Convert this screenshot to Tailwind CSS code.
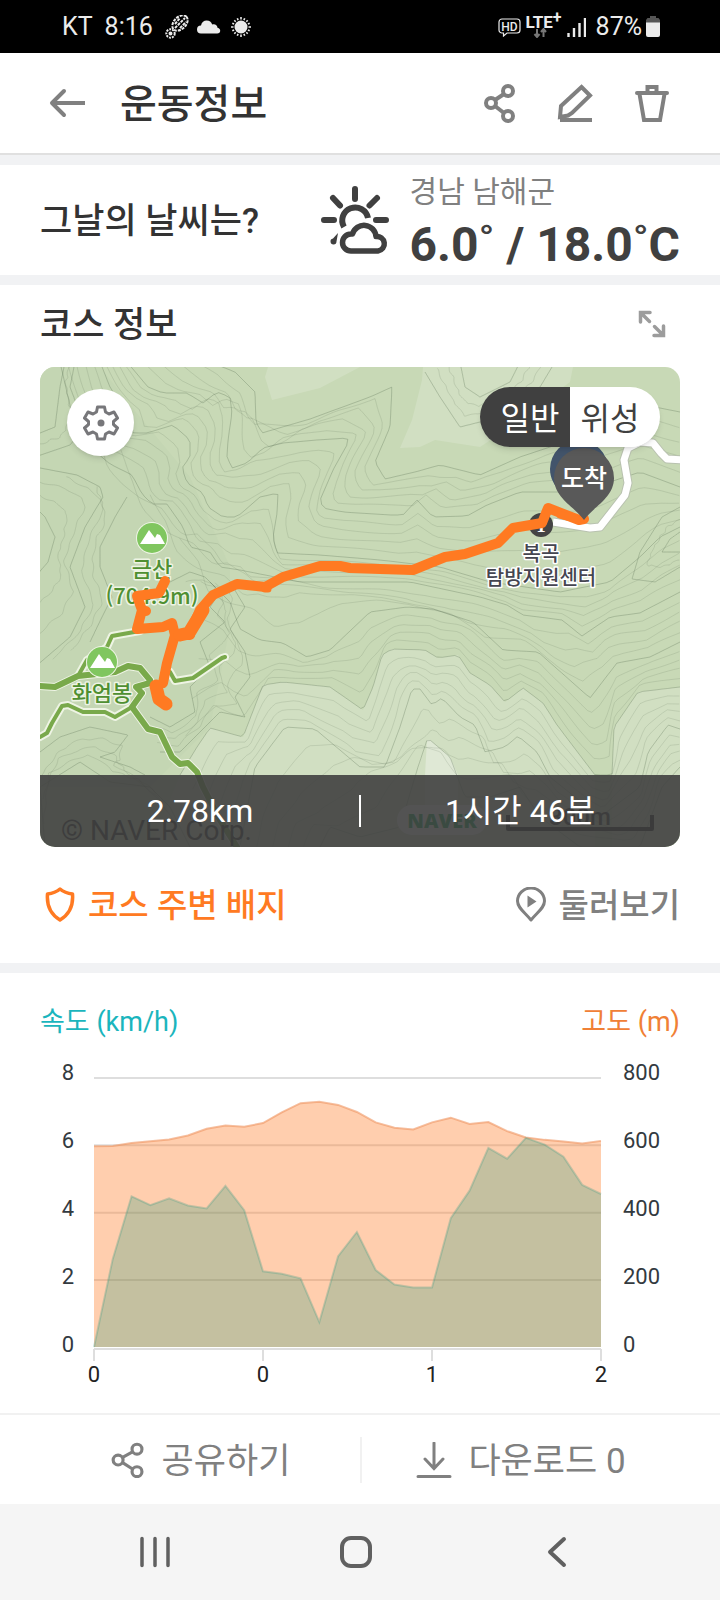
<!DOCTYPE html>
<html lang="ko">
<head>
  <meta charset="UTF-8" />
  <meta name="viewport" content="width=device-width, initial-scale=1" />
  <title>운동정보</title>
  <script src="https://cdn.jsdelivr.net/npm/@tailwindcss/browser@4"></script>
</head>
<body class="bg-white font-['Roboto','Noto_Sans_CJK_KR',sans-serif] text-[#333333]">

  <!-- 상태 표시줄 -->
  <div class="flex h-[53px] items-center justify-between bg-black pl-[62px] pr-[60px] text-[25px] leading-8 text-[#ebebeb]">
    <div class="flex items-center">
      <span>KT</span>
      <span class="ml-3">8:16</span>
      <svg class="ml-3 h-6 w-6" viewBox="0 0 24 24" fill="none" stroke="#ebebeb" stroke-width="2">
        <ellipse cx="15" cy="8" rx="9" ry="6" transform="rotate(-45 15 8)" stroke-dasharray="3 1" />
        <path d="M10 13L20 3M10 9l5-6M15 13l6-6" stroke-dasharray="3 1" />
        <circle cx="5.500" cy="18.500" r="4.200" stroke-dasharray="2 1" />
        <circle cx="5.500" cy="18.500" r="1" />
      </svg>
      <svg class="ml-2 h-6 w-6" viewBox="0 0 24 24" fill="#ebebeb">
        <path d="M4 18.500a4 4 0 0 1 0-8c.6-3.500 3-5 5.600-5 3 0 4.700 1.600 5.600 4 3-.8 5 .8 5.300 3.300 2 .4 2.700 1.600 2.700 3 0 1.700-1.200 2.700-3 2.700z" />
      </svg>
      <svg class="ml-2 h-6 w-6" viewBox="0 0 24 24" stroke="#ebebeb" stroke-width="1.600">
        <circle cx="12" cy="12" r="6.500" fill="#ebebeb" stroke="none" />
        <path d="M12 2v2.500M12 19.500v2.500M2 12h2.500M19.500 12h2.500M5.300 5.300l1.400 1.400M17.300 17.300l1.400 1.400M5.300 18.700l1.400-1.400M17.300 6.700l1.400-1.400M8.300 3.300l.8 1.800M14.900 18.900l.8 1.800M3.300 8.300l1.800.8M18.900 14.900l1.800.8M15.700 3.300l-.8 1.800M9.100 18.900l-.8 1.800M20.700 8.300l-1.800.8M5.100 14.900l-1.800.8" />
      </svg>
    </div>
    <div class="flex items-center">
      <svg class="h-5 w-[23px]" viewBox="0 0 23 20" fill="none" stroke="#ebebeb" stroke-width="1.200">
        <path d="M4 2h15a3 3 0 0 1 3 3v8a3 3 0 0 1-3 3H9l-3.500 3V16H4a3 3 0 0 1-3-3V5a3 3 0 0 1 3-3z" />
        <text x="11.500" y="13.500" text-anchor="middle" font-family="Roboto, sans-serif" font-size="12" font-weight="500" fill="#ebebeb" stroke="none">HD</text>
      </svg>
      <div class="ml-1 flex flex-col items-center">
        <div class="flex text-[17px] leading-3 font-bold">LTE<span class="-mt-1 text-base leading-3">+</span></div>
        <svg class="-ml-2 h-2.5 w-3.5" viewBox="0 0 14 10" fill="none" stroke="#777" stroke-width="2">
          <path d="M4 1v8M1.500 6L4 9l2.500-3M10.500 9V1M8 4l2.500-3L13 4" />
        </svg>
      </div>
      <svg class="ml-1 h-5 w-5" viewBox="0 0 20 20" stroke="#ebebeb" stroke-width="2.400">
        <path d="M2.500 16v4M8 11v9M13.500 6v14M19 1v19" />
      </svg>
      <span class="ml-2.5">87%</span>
      <svg class="ml-1 h-[21px] w-3.5" viewBox="0 0 14 21">
        <path d="M4 0h6v2h2.500L14 4v3H0V4l1.500-2H4z" fill="#555" />
        <path d="M0 6.500h14V19a2 2 0 0 1-2 2H2a2 2 0 0 1-2-2z" fill="#ebebeb" />
      </svg>
    </div>
  </div>

  <!-- 상단 헤더 -->
  <header class="flex h-[102px] items-center border-b-2 border-[#e0e0e0] pl-[49px] pr-12 text-[#808080]">
    <button type="button" aria-label="뒤로" class="shrink-0">
      <svg class="h-9 w-9" viewBox="0 0 36 36" fill="none" stroke="currentColor" stroke-width="4" stroke-linecap="round" stroke-linejoin="round">
        <path d="M15 6L3 18l12 12" /><path d="M3 18h33" stroke-linecap="butt" />
      </svg>
    </button>
    <h1 class="ml-[35px] flex-1 pt-1 text-[40px] leading-[60px] font-medium text-[#333333]">운동정보</h1>
    <div class="flex items-center gap-9">
      <button type="button" aria-label="공유">
        <svg class="h-10 w-10" viewBox="0 0 40 40" fill="none" stroke="currentColor" stroke-width="4">
          <circle cx="11" cy="20" r="5" /><circle cx="28" cy="8" r="5" /><circle cx="28" cy="33" r="5" /><path d="M15 17l9-6M15 23l9 7" />
        </svg>
      </button>
      <button type="button" aria-label="편집">
        <svg class="h-10 w-10" viewBox="0 0 40 40" fill="none" stroke="currentColor" stroke-width="4">
          <path d="M25.500 4l8.500 8.500L16 30l-4 2.500-8 1.500 1-11z" /><path d="M4 37h32" />
        </svg>
      </button>
      <button type="button" aria-label="삭제">
        <svg class="h-10 w-10" viewBox="0 0 40 40" fill="none" stroke="currentColor" stroke-width="4">
          <path d="M5 10h30" stroke-linecap="round" /><path d="M15.500 9V4h9v5M7.500 11l4.500 26h16l4.500-26" />
        </svg>
      </button>
    </div>
  </header>

  <!-- 날씨 -->
  <section class="flex h-[130px] items-center justify-between border-y-10 border-[#f1f2f4] px-10">
    <h2 class="pt-1 text-[35px] leading-[50px] font-medium">그날의 날씨는?</h2>
    <div class="flex items-center text-[#404040]">
      <svg class="h-[70px] w-[70px]" viewBox="0 0 70 70" fill="none" stroke="currentColor" stroke-width="6" stroke-linecap="round">
        <path d="M35 4v10M13 13l7 7.500M57 13l-7.500 7.500M4 35h10M56 35h10" />
        <path d="M24 42a13 13 0 1 1 24-9" stroke-linecap="butt" />
        <path d="M31 66a8.500 8.500 0 0 1 0-17h1.500a12 12 0 0 1 23.500 2.500a7.300 7.300 0 0 1 2 14.500z" stroke-width="5.500" stroke-linejoin="round" />
        <path d="M18 48l-5 5.500a3 3 0 1 0 3.500 3z" fill="currentColor" stroke="none" />
      </svg>
      <div class="ml-5 pt-1">
        <p class="text-[30px] leading-[46px] text-[#808080]">경남 남해군</p>
        <p class="text-5xl leading-[60px] font-bold">6.0˚ / 18.0˚C</p>
      </div>
    </div>
  </section>

  <!-- 코스 정보 -->
  <section class="px-10">
    <div class="flex h-[82px] items-center justify-between pb-1 pr-3.5">
      <h2 class="pt-1 text-[35px] leading-[50px] font-medium">코스 정보</h2>
      <button type="button" aria-label="크게 보기" class="text-[#9c9c9c]">
        <svg class="h-7 w-7" viewBox="0 0 28 28" fill="none" stroke="currentColor" stroke-width="3.500" stroke-linecap="round" stroke-linejoin="miter">
          <path d="M2.500 12V2.500H12M3.500 3.500l8 8M25.500 16v9.500H16M24.500 24.500l-8-8" />
        </svg>
      </button>
    </div>

    <!-- 지도 -->
    <div class="relative h-[480px] overflow-hidden rounded-[15px] bg-[#c8d9b6]">
      <svg class="h-full w-full" viewBox="0 0 640 480" preserveAspectRatio="xMidYMid slice" fill="none" stroke-linejoin="round" font-family="'Noto Sans CJK KR', sans-serif" text-anchor="middle">
        <path fill="#c4d6b3" d="M0 0h60l40 50 50 60 40 90 0 60-20 100-60 60H0z" />
        <g fill="#d1dfc2">
          <path d="M228 0l-3 10 7 23 48-12L320 0zM383 0l-1 13-10 40-12 28 20-1 15-7 45 7 30-20 60-45 3-15z" />
          <path d="M140 408L157 380 170 361 203 370 223 318 243 315 290 320 323 343 333 320 342 288 352 282 385 283 398 291 418 288 430 306 450 318 465 335 483 321 503 336 517 358 555 408V480H110zM572 408L574 360 598 325 604 324 640 320V480H572z" />
        </g>
        <path fill="#dfe8d5" d="M385 408l2-35h3l20 17 8 18v60h-33z" />
        <g id="contours" stroke="#5d7356"></g>

        <!-- 등산로 -->
        <g stroke-linecap="round">
          <path stroke="#eef4e4" stroke-width="8" d="M0 319L15 320 38 309 57 307 75 305 88 299 100 301 110 313M110 316L96 320 102 326 92 340 108 362 120 365 132 390 140 397 148 396 157 405 163 420 180 453 197 480M38 309L47 293 67 280 72 269 83 267 100 264M92 340L75 350 65 345 43 345 28 338 22 339 12 356 7 366 0 370M130 305L135 314 153 311 182 291 185 290" />
          <path stroke="#79a94b" stroke-width="6" d="M0 319L15 320 38 309 57 307 75 305 88 299 100 301 110 313M110 316L96 320 102 326 92 340 108 362 120 365 132 390 140 397 148 396 157 405 163 420 180 453 197 480" />
          <path stroke="#79a94b" stroke-width="4" d="M38 309L47 293 67 280 72 269 83 267 100 264M92 340L75 350 65 345 43 345 28 338 22 339 12 356 7 366 0 370M130 305L135 314 153 311 182 291 185 290" />
        </g>

        <!-- 도로 -->
        <path stroke="#b9c2b0" stroke-width="9" d="M644 93L627 92 621 86 613 76 600 75 588 81 584 93 588 116 585 128 560 160 550 161 513 155" />
        <path stroke="#fff" stroke-width="7" d="M644 93L627 92 621 86 613 76 600 75 588 81 584 93 588 116 585 128 560 160 550 161 513 155" />

        <!-- 봉우리 -->
        <g font-size="22" font-weight="500" fill="#4f8f32" stroke="#eef4e4" stroke-width="3" paint-order="stroke">
          <circle cx="112" cy="171" r="15" fill="#80c65f" stroke-width="2" />
          <circle cx="62" cy="295" r="15" fill="#80c65f" stroke-width="2" />
          <path fill="#fff" stroke="none" d="M100 177l9-14 6 8 2-4 3 1 5 9zM50 301l9-14 6 8 2-4 3 1 5 9z" />
          <text x="112" y="210">금산</text>
          <text x="112" y="237">(704.9m)</text>
          <text x="62" y="334">화엄봉</text>
        </g>

        <circle cx="501" cy="158" r="12" fill="#444" />
        <text x="501" y="165" font-family="'Liberation Serif', serif" font-size="19" font-weight="700" fill="#fff">1</text>
        <g font-size="20" font-weight="500" fill="#454550" stroke="#fff" stroke-width="3" paint-order="stroke">
          <text x="501" y="194">복곡</text>
          <text x="501" y="218">탐방지원센터</text>
        </g>

        <!-- 이동 경로 -->
        <g stroke="#ff7a22" stroke-linecap="round">
          <path stroke-width="10" d="M544 152L539 153 508 141 502 156 473 161 458 176 425 187 405 190 373 203 340 202 310 201 300 199 280 199 243 210 225 220 197 217 173 228 160 243 150 266" />
          <path stroke-width="10" d="M150 268L135 268 127 296 123 316M135 268L132 256 123 260 97 262 102 243 97 229 119 226 125 214M102 243L106 244" />
          <path stroke-width="13" d="M163 243L149 266 140 268M116 319L119 332 126 337" />
          <path stroke-width="7" d="M540 153L520 148M225 222L228 222" />
        </g>

        <!-- 출발 / 도착 핀 -->
        <path fill="#42546b" d="M539 144c-9-13-29-22-29-42a29 29 0 0 1 58 0c0 20-20 29-29 42z" />
        <path fill="#595959" d="M544 153c-9-13-30-22-30-42a30 30 0 0 1 60 0c0 20-21 29-30 42z" />
        <text x="544" y="120" font-size="25" font-weight="500" fill="#fff">도착</text>

        <text x="21" y="473" text-anchor="start" font-family="Roboto, sans-serif" font-size="28" fill="#222">© NAVER Corp.</text>
        <rect x="357" y="438" width="90" height="30" rx="15" fill="#fff" />
        <text x="402" y="461" font-family="'Open Sans', sans-serif" font-size="20" font-weight="800" fill="#03a64a">NAVER</text>
        <path stroke="#111" stroke-width="4" d="M468 448v14h144v-14" />
        <text x="540" y="458" font-family="Roboto, sans-serif" font-size="24" font-weight="500" fill="#222">300m</text>
      </svg>

      <button type="button" aria-label="지도 설정" class="absolute left-[27px] top-[22px] flex h-[67px] w-[67px] items-center justify-center rounded-full bg-white text-[#77777a] shadow-md">
        <svg class="h-9 w-9" viewBox="0 0 36 36" fill="none" stroke="currentColor" stroke-width="3" stroke-linejoin="round">
          <path d="M14.500 2h7l1 5 3.500 2 5-2 3.500 6-4 3.500v3l4 3.500-3.500 6-5-2-3.500 2-1 5h-7l-1-5-3.500-2-5 2-3.500-6 4-3.500v-3l-4-3.500 3.500-6 5 2 3.500-2z" />
          <circle cx="18" cy="18" r="3.500" fill="currentColor" stroke="none" />
        </svg>
      </button>

      <div class="absolute right-5 top-5 flex h-[60px] overflow-hidden rounded-full text-[32px] leading-none shadow-md">
        <button type="button" class="w-[90px] bg-[#404040] pl-2.5 pt-1 text-white">일반</button>
        <button type="button" class="w-[90px] bg-white pr-2.5 pt-1 text-[#404040]">위성</button>
      </div>

      <div class="absolute inset-x-0 bottom-0 grid h-[72px] grid-cols-2 items-center bg-[#404040]/90 text-center text-[32px] leading-[50px] text-white">
        <p>2.78km</p>
        <p>1시간 46분</p>
        <div class="absolute left-1/2 top-5 h-8 w-0.5 -translate-x-1/2 bg-white"></div>
      </div>
    </div>

    <div class="flex h-[116px] items-center justify-between text-[33px] leading-[50px] font-medium">
      <button type="button" class="flex items-center gap-2 text-[#ff7a22]">
        <svg class="h-9 w-10" viewBox="0 0 40 36" fill="none" stroke="currentColor" stroke-width="3.500" stroke-linejoin="round">
          <path d="M20 2c3.500 3 8 4.500 12.500 5 1 12-2.500 20-12.500 26C10 27 6.500 19 7.500 7 12 6.500 16.500 5 20 2z" />
        </svg>
        <span class="pt-0.5">코스 주변 배지</span>
      </button>
      <button type="button" class="flex items-center gap-3 text-[#808080]">
        <svg class="h-9 w-8" viewBox="0 0 32 36" fill="none" stroke="currentColor" stroke-width="3" stroke-linejoin="round">
          <path d="M16 33C10 25.500 2.500 21 2.500 14a13.500 13 0 0 1 27 0C29.500 21 22 25.500 16 33z" />
          <path d="M12.500 8.500l9 6-9 6z" fill="currentColor" stroke="none" />
        </svg>
        <span class="pt-0.5">둘러보기</span>
      </button>
    </div>
  </section>

  <!-- 속도 / 고도 그래프 -->
  <section class="border-t-10 border-[#f1f2f4] px-10 pt-7">
    <div class="flex justify-between text-[27px] leading-[42px]">
      <span class="text-[#1bb5bd]">속도 (km/h)</span>
      <span class="text-[#f08036]">고도 (m)</span>
    </div>
    <div class="mt-5 flex text-[22px] leading-5 text-[#333a3f]">
      <div class="flex h-[292px] w-[34px] flex-col justify-between text-right">
        <span>8</span><span>6</span><span>4</span><span>2</span><span>0</span>
      </div>
      <div class="ml-5 flex-1 pt-3.5">
        <svg class="h-[284px] w-full overflow-visible" viewBox="0 0 540 284" preserveAspectRatio="none" fill="none">
          <path stroke="#dedede" stroke-width="2" d="M0 1h540M0 68.300h540M0 135.700h540M0 203h540M0 272h540" vector-effect="non-scaling-stroke" />
          <path stroke="#dedede" stroke-width="2" d="M0 272v12M180 272v12M360 272v12M540 272v12" vector-effect="non-scaling-stroke" />
          <polygon id="altArea" fill="#ff7a22" fill-opacity=".37" />
          <polyline id="altLine" stroke="#ee9460" stroke-opacity=".6" stroke-width="2" vector-effect="non-scaling-stroke" />
          <polygon id="speedArea" fill="#009175" fill-opacity=".23" />
          <polyline id="speedLine" stroke="#3f9c86" stroke-opacity=".3" stroke-width="2" vector-effect="non-scaling-stroke" />
        </svg>
        <div class="-mx-3 flex justify-between text-center leading-7 text-[#222]">
          <span class="w-6">0</span><span class="w-6">0</span><span class="w-6">1</span><span class="w-6">2</span>
        </div>
      </div>
      <div class="ml-[22px] flex h-[292px] w-[57px] flex-col justify-between">
        <span>800</span><span>600</span><span>400</span><span>200</span><span>0</span>
      </div>
    </div>
  </section>

  <!-- 하단 버튼 -->
  <div class="mt-6 grid h-[91px] grid-cols-2 items-center border-t-2 border-[#f1f1f1] px-10 text-[35px] leading-[50px] text-[#808080]">
    <button type="button" class="flex items-center justify-center gap-4">
      <svg class="h-9 w-9" viewBox="0 0 40 40" fill="none" stroke="currentColor" stroke-width="3.500">
        <circle cx="9" cy="20" r="5.500" /><circle cx="30" cy="8" r="5.500" /><circle cx="30" cy="33" r="5.500" /><path d="M14 17l11-6M14 23l11 7" />
      </svg>
      <span class="pt-1">공유하기</span>
    </button>
    <button type="button" class="flex h-[46px] items-center justify-center gap-4 border-l-2 border-[#f1f1f1]">
      <svg class="h-9 w-9" viewBox="0 0 36 36" fill="none" stroke="currentColor" stroke-width="3" stroke-linecap="round">
        <path d="M18 1v25M9 17l9 9.500 9-9.500M2 34.500h32" />
      </svg>
      <span class="pt-1">다운로드 0</span>
    </button>
  </div>

  <!-- 내비게이션 바 -->
  <nav class="grid h-24 grid-cols-3 items-center justify-items-center bg-[#f5f5f5] pl-[54px] pr-[62px] text-[#606060]">
    <button type="button" aria-label="최근 앱">
      <svg class="h-9 w-9" viewBox="0 0 36 36" fill="none" stroke="currentColor" stroke-width="3.500" stroke-linecap="round"><path d="M5 4.500v27M18 4.500v27M31 4.500v27" /></svg>
    </button>
    <button type="button" aria-label="홈">
      <svg class="h-9 w-9" viewBox="0 0 36 36" fill="none" stroke="currentColor" stroke-width="4"><rect x="4" y="4" width="28" height="28" rx="9" /></svg>
    </button>
    <button type="button" aria-label="뒤로 가기">
      <svg class="h-9 w-9" viewBox="0 0 36 36" fill="none" stroke="currentColor" stroke-width="4" stroke-linecap="round" stroke-linejoin="round"><path d="M25 5L11 18l14 13" /></svg>
    </button>
  </nav>

  <script>
    // 그래프 데이터
    const speed = [0, 2.62, 4.48, 4.22, 4.42, 4.21, 4.12, 4.79, 4.07, 2.25, 2.18, 2.04, 0.74, 2.7, 3.42, 2.29, 1.86, 1.77, 1.77, 3.83, 4.65, 5.92, 5.6, 6.22, 6.02, 5.66, 4.82, 4.55];
    const altitude = [597, 598, 607, 612, 617, 629, 649, 659, 655, 666, 698, 725, 729, 720, 699, 668, 652, 647, 668, 682, 663, 669, 642, 623, 616, 611, 605, 613];

    function drawSeries(name, values, max) {
      const points = values.map((v, i) => `${i * 20},${270 - v / max * 269}`).join(' ');
      document.getElementById(name + 'Line').setAttribute('points', points);
      document.getElementById(name + 'Area').setAttribute('points', `0,270 ${points} 540,270`);
    }
    drawSeries('alt', altitude, 800);
    drawSeries('speed', speed, 8);

    // 등고선: 굵은 선 사이를 보간해서 가는 선을 그린다
    const ridges = [
      { steps: 5, lines: [
        [170,-5,195,5,215,25,216,55,222,66,270,52,330,30,352,20,350,60,335,95,345,112,375,105,400,98,440,108,480,90,540,70,560,50,590,35,640,45],
        [87,-5,108,20,123,26,147,26,163,36,177,25,190,30,192,46,188,73,187,90,192,101,207,96,223,81,243,76,277,73,308,71,307,78,293,103,280,133,283,141,303,145,350,148,363,148,377,133,393,150,427,149,447,138,480,125,540,125,600,105,640,120],
        [60,-5,70,20,80,36,90,46,93,66,107,66,133,58,150,73,150,90,142,101,147,116,163,126,168,140,183,150,197,150,220,130,238,126,237,146,233,170,237,186,280,188,340,193,400,200,450,215,520,225,570,215,600,190,620,170,640,160],
        [20,-5,35,60,50,80,70,97,92,108,102,127,112,137,127,137,143,160,150,180,170,185,180,200,200,203,260,215,300,215,370,215,440,230,467,238,483,248,522,253,542,269,570,250,600,246,640,225],
        [170,215,190,235,200,262,220,273,243,276,267,290,290,283,330,245,367,240,393,242,433,255,463,283,498,285,550,331,577,296,610,290,640,275],
        [140,408,157,380,170,361,203,370,223,318,243,315,290,320,323,343,333,320,342,288,352,282,385,283,398,291,418,288,430,306,450,318,465,335,483,321,503,336,517,358,555,408,572,408,574,360,598,325,640,320],
        [200,480,215,400,245,360,275,362,320,400,345,400,360,360,372,322,380,322,392,338,402,331,420,350,435,358,445,385,465,380,478,369,497,385,510,410,560,450,600,420,608,385,628,358,640,362],
        [280,480,290,460,320,470,360,460,378,400,387,373,390,373,410,390,425,430,450,430,480,420,500,450,540,480,600,480,622,420,640,400]
      ] },
      { steps: 3, lines: [
        [-5,140,5,150,15,170,8,195,-5,210],
        [-5,100,37,108,60,120,63,130,45,160,30,200,45,240,30,270,-5,300],
        [87,130,75,150,60,180,60,200,72,230,62,250,50,275]
      ] },
      { steps: 2, lines: [
        [-5,68,15,60,20,20,25,-5],
        [-5,90,30,78,45,60,30,20,35,-5]
      ] },
      { steps: 4, lines: [
        [0,385,20,370,50,360,88,368,75,385,60,390,90,400,105,408],
        [5,480,0,420,40,395,70,415,110,420,130,440,150,480]
      ] },
      { steps: 4, lines: [
        [130,215,150,205,165,210,180,225,170,240,185,255,160,275,170,300,150,320,155,345,130,360,110,350],
        [190,215,205,240,190,262,205,285,210,310,195,330,205,350,180,345,160,365,140,385,120,385]
      ] },
      { steps: 3, lines: [
        [385,5,400,30,420,60,460,50,500,20,515,-5],
        [420,-5,425,20,440,30,470,15,480,-5]
      ] },
      { steps: 2, lines: [
        [640,140,622,150,600,185,592,212,615,215,640,200],
        [640,165,630,172,622,185,640,185]
      ] }
    ];

    // 선을 따라 같은 간격으로 n개의 점을 뽑는다
    function resample(flat, n) {
      const pts = [];
      for (let i = 0; i < flat.length; i += 2) pts.push([flat[i], flat[i + 1]]);
      const dist = [0];
      for (let i = 1; i < pts.length; i++) {
        dist.push(dist[i - 1] + Math.hypot(pts[i][0] - pts[i - 1][0], pts[i][1] - pts[i - 1][1]));
      }
      const out = [];
      let seg = 1;
      for (let k = 0; k < n; k++) {
        const d = dist[dist.length - 1] * k / (n - 1);
        while (seg < pts.length - 1 && dist[seg] < d) seg++;
        const t = (d - dist[seg - 1]) / (dist[seg] - dist[seg - 1]);
        out.push([
          pts[seg - 1][0] + (pts[seg][0] - pts[seg - 1][0]) * t,
          pts[seg - 1][1] + (pts[seg][1] - pts[seg - 1][1]) * t
        ]);
      }
      return out;
    }

    const contours = document.getElementById('contours');
    function addContour(points, bold) {
      const line = document.createElementNS('http://www.w3.org/2000/svg', 'polyline');
      line.setAttribute('points', points.map(p => p[0].toFixed(1) + ',' + p[1].toFixed(1)).join(' '));
      line.setAttribute('stroke-opacity', bold ? 0.32 : 0.17);
      contours.appendChild(line);
    }
    ridges.forEach(({ steps, lines }) => {
      const sampled = lines.map(l => resample(l, 120));
      sampled.forEach((line, i) => {
        addContour(line, true);
        const next = sampled[i + 1];
        if (!next) return;
        for (let s = 1; s < steps; s++) {
          const t = s / steps;
          addContour(line.map((p, j) => [
            p[0] + (next[j][0] - p[0]) * t + Math.sin(j * 0.5 + s) * 0.8,
            p[1] + (next[j][1] - p[1]) * t + Math.cos(j * 0.4 + s * 2) * 0.8
          ]), false);
        }
      });
    });
  </script>
</body>
</html>
